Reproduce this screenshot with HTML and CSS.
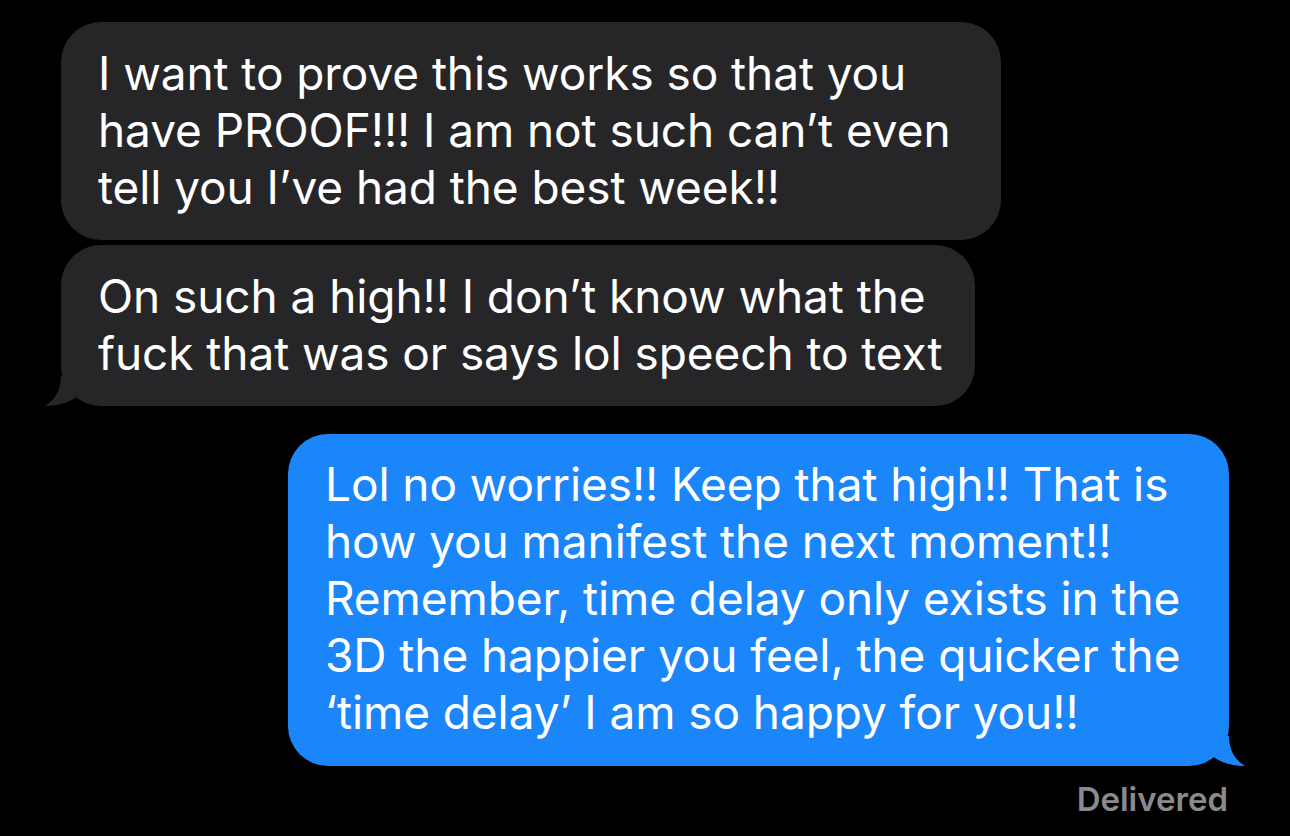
FILE: index.html
```html
<!DOCTYPE html>
<html>
<head>
<meta charset="utf-8">
<link rel="stylesheet" href="styles.css">
</head>
<body>
<div class="thread">
  <div class="bubble them b1">I want to prove this works so that you<br>have PROOF!!! I am not such can’t even<br>tell you I’ve had the best week!!</div>
  <div class="bubble them b2 tail">On such a high!! I don’t know what the<br>fuck that was or says lol speech to text
    <svg class="tail-svg" width="70" height="30" viewBox="0 0 70 30"><path d="M16,0 L70,0 L70,30 C55,30 42,27 35,18 C27,26 14,30 0,30 C10,24 16,14 16,0 Z"/></svg>
  </div>
  <div class="bubble me tail">Lol no worries!! Keep that high!! That is<br>how you manifest the next moment!!<br>Remember, time delay only exists in the<br>3D the happier you feel, the quicker the<br>‘time delay’ I am so happy for you!!
    <svg class="tail-svg" width="70" height="30" viewBox="0 0 70 30"><path d="M16,0 L70,0 L70,30 C55,30 42,27 35,18 C27,26 14,30 0,30 C10,24 16,14 16,0 Z"/></svg>
  </div>
  <div class="status">Delivered</div>
</div>
</body>
</html>
```
FILE: styles.css
```css
html, body {
  margin: 0;
  padding: 0;
  background: #000;
}
.thread {
  width: 1290px;
  height: 836px;
  box-sizing: border-box;
  padding: 22px 61px 0 61px;
  display: flex;
  flex-direction: column;
  font-family: "Inter", "Liberation Sans", sans-serif;
}
.bubble {
  position: relative;
  box-sizing: border-box;
  font-size: 46px;
  line-height: 57px;
  letter-spacing: -0.08px;
  color: #fff;
  white-space: nowrap;
  border-radius: 40px;
  padding: 23px 37px 24px 37px;
}
.them {
  align-self: flex-start;
  background: #262628;
}
.b1 { width: 940px; }
.b2 { width: 914px; margin-top: 5px; }
.me {
  align-self: flex-end;
  width: 941px;
  margin-top: 28px;
  background: #1b86f9;
  padding-top: 22px;
  padding-bottom: 25px;
}
.tail-svg {
  position: absolute;
  bottom: 0;
  left: -16px;
  display: block;
}
.them .tail-svg path { fill: #262628; }
.me .tail-svg {
  left: auto;
  right: -16px;
  transform: scaleX(-1);
}
.me .tail-svg path { fill: #1b86f9; }
.status {
  align-self: flex-end;
  margin-top: 13px;
  margin-right: 1px;
  font-size: 33px;
  font-weight: 600;
  color: #8a8a8e;
  line-height: 40px;
}
```
